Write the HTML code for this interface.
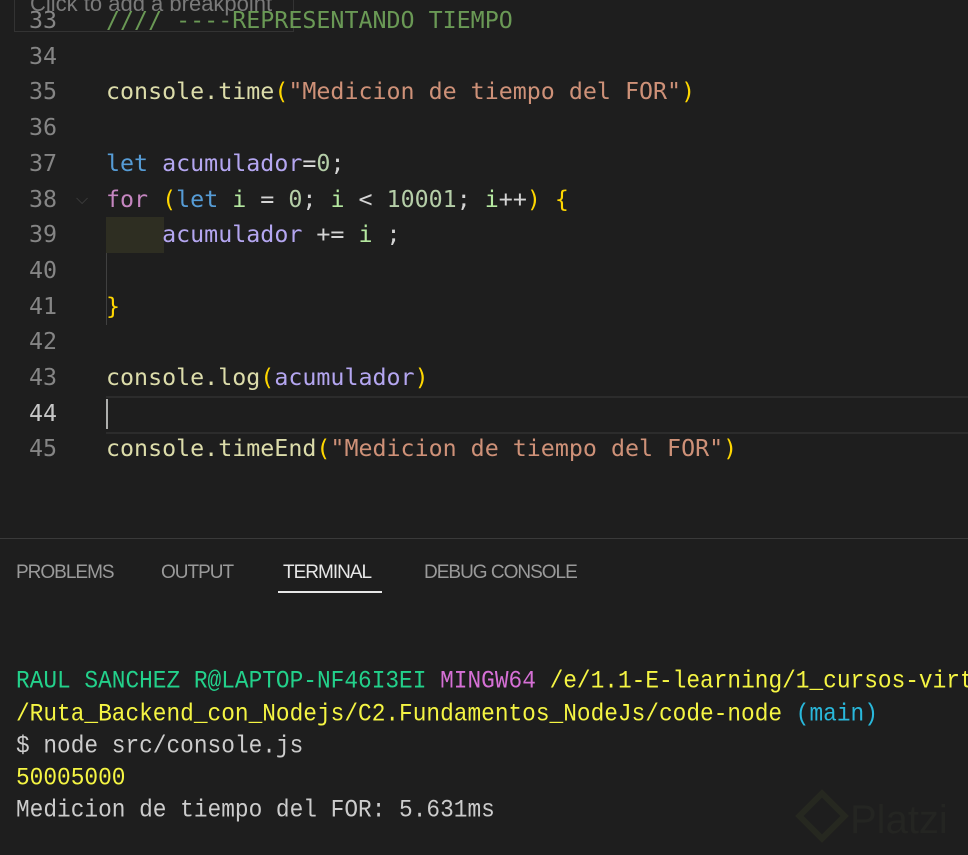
<!DOCTYPE html>
<html><head><meta charset="utf-8"><style>
html,body{margin:0;padding:0;background:#1e1e1e;width:968px;height:855px;overflow:hidden;position:relative}
.ln{position:absolute;left:0;width:57px;text-align:right;font:23.3px/36px "DejaVu Sans Mono","Liberation Mono",monospace;color:#858585}
.cd{position:absolute;left:106px;font:23.3px/36px "DejaVu Sans Mono","Liberation Mono",monospace;color:#d4d4d4;white-space:pre}
.y{color:#dcdcaa}.s{color:#ce9178}.p{color:#ffd700}.b{color:#569cd6}.v{color:#b4a6f0}.n{color:#b5cea8}.k{color:#c586c0}.g{color:#6a9955}.ig{color:#b5e8a0}
.tab{position:absolute;top:561px;font:19px/24px "Liberation Sans",sans-serif;letter-spacing:-1px;color:#9a9a9a}
.t{position:absolute;left:16px;font:22.8px/32px "Liberation Mono","DejaVu Sans Mono",monospace;color:#cccccc;white-space:pre;transform:scaleY(1.08);transform-origin:left center}
</style></head><body>
<div style="position:absolute;left:106px;top:396px;width:862px;height:34px;border-top:2px solid #2c2c2c;border-bottom:2px solid #2c2c2c"></div>
<div style="position:absolute;left:106px;top:217px;width:58px;height:36px;background:#2e2e22"></div>
<div style="position:absolute;left:106px;top:253px;width:1px;height:72px;background:#404040"></div>
<div style="position:absolute;left:106px;top:399px;width:2px;height:30px;background:#aeafad"></div>
<div style="position:absolute;left:14px;top:-6px;width:278px;height:36px;border:1px solid #333;background:rgba(30,30,30,0.5)"></div>
<div style="position:absolute;left:30px;top:-11px;font:22px/30px 'Liberation Sans',sans-serif;color:#7a7a7a">Click to add a breakpoint</div>

<div class="ln" style="top:3px">33</div><div class="cd g" style="top:3px">//// ----REPRESENTANDO TIEMPO</div>
<div class="ln" style="top:39px">34</div>
<div class="ln" style="top:74px">35</div><div class="cd" style="top:74px"><span class="y">console.time</span><span class="p">(</span><span class="s">"Medicion de tiempo del FOR"</span><span class="p">)</span></div>
<div class="ln" style="top:110px">36</div>
<div class="ln" style="top:146px">37</div><div class="cd" style="top:146px"><span class="b">let</span> <span class="v">acumulador</span>=<span class="n">0</span>;</div>
<div class="ln" style="top:182px">38</div><div style="position:absolute;left:76px;top:182px;font:16px/36px 'Liberation Sans';color:#444">⌵</div><div class="cd" style="top:182px"><span class="k">for</span> <span class="p">(</span><span class="b">let</span> <span class="ig">i</span> = <span class="n">0</span>; <span class="ig">i</span> &lt; <span class="n">10001</span>; <span class="ig">i</span>++<span class="p">)</span> <span class="p">{</span></div>
<div class="ln" style="top:217px">39</div><div class="cd" style="top:217px">    <span class="v">acumulador</span> += <span class="ig">i</span> ;</div>
<div class="ln" style="top:253px">40</div>
<div class="ln" style="top:289px">41</div><div class="cd p" style="top:289px">}</div>
<div class="ln" style="top:324px">42</div>
<div class="ln" style="top:360px">43</div><div class="cd" style="top:360px"><span class="y">console.log</span><span class="p">(</span><span class="v">acumulador</span><span class="p">)</span></div>
<div class="ln" style="top:396px;color:#c6c6c6">44</div>
<div class="ln" style="top:431px">45</div><div class="cd" style="top:431px"><span class="y">console.timeEnd</span><span class="p">(</span><span class="s">"Medicion de tiempo del FOR"</span><span class="p">)</span></div>

<div style="position:absolute;left:0;top:538px;width:968px;height:1px;background:#3a3a3a"></div>
<div class="tab" style="left:16px">PROBLEMS</div>
<div class="tab" style="left:161px">OUTPUT</div>
<div class="tab" style="left:283px;color:#e7e7e7">TERMINAL</div>
<div class="tab" style="left:424px">DEBUG CONSOLE</div>
<div style="position:absolute;left:278px;top:591px;width:104px;height:2px;background:#e7e7e7"></div>

<div class="t" style="top:665px"><span style="color:#23d18b">RAUL SANCHEZ R@LAPTOP-NF46I3EI</span> <span style="color:#d670d6">MINGW64</span> <span style="color:#f5f543">/e/1.1-E-learning/1_cursos-virt</span></div>
<div class="t" style="top:698px"><span style="color:#f5f543">/Ruta_Backend_con_Nodejs/C2.Fundamentos_NodeJs/code-node</span> <span style="color:#29b8db">(main)</span></div>
<div class="t" style="top:730px">$ node src/console.js</div>
<div class="t" style="top:762px;color:#f5f543">50005000</div>
<div class="t" style="top:794px">Medicion de tiempo del FOR: 5.631ms</div>
<div style="position:absolute;left:803px;top:797px;width:26px;height:26px;border:6px solid #262820;transform:rotate(45deg)"></div>
<div style="position:absolute;left:850px;top:795px;font:40px/50px 'Liberation Sans',sans-serif;color:#242522">Platzi</div>
</body></html>
